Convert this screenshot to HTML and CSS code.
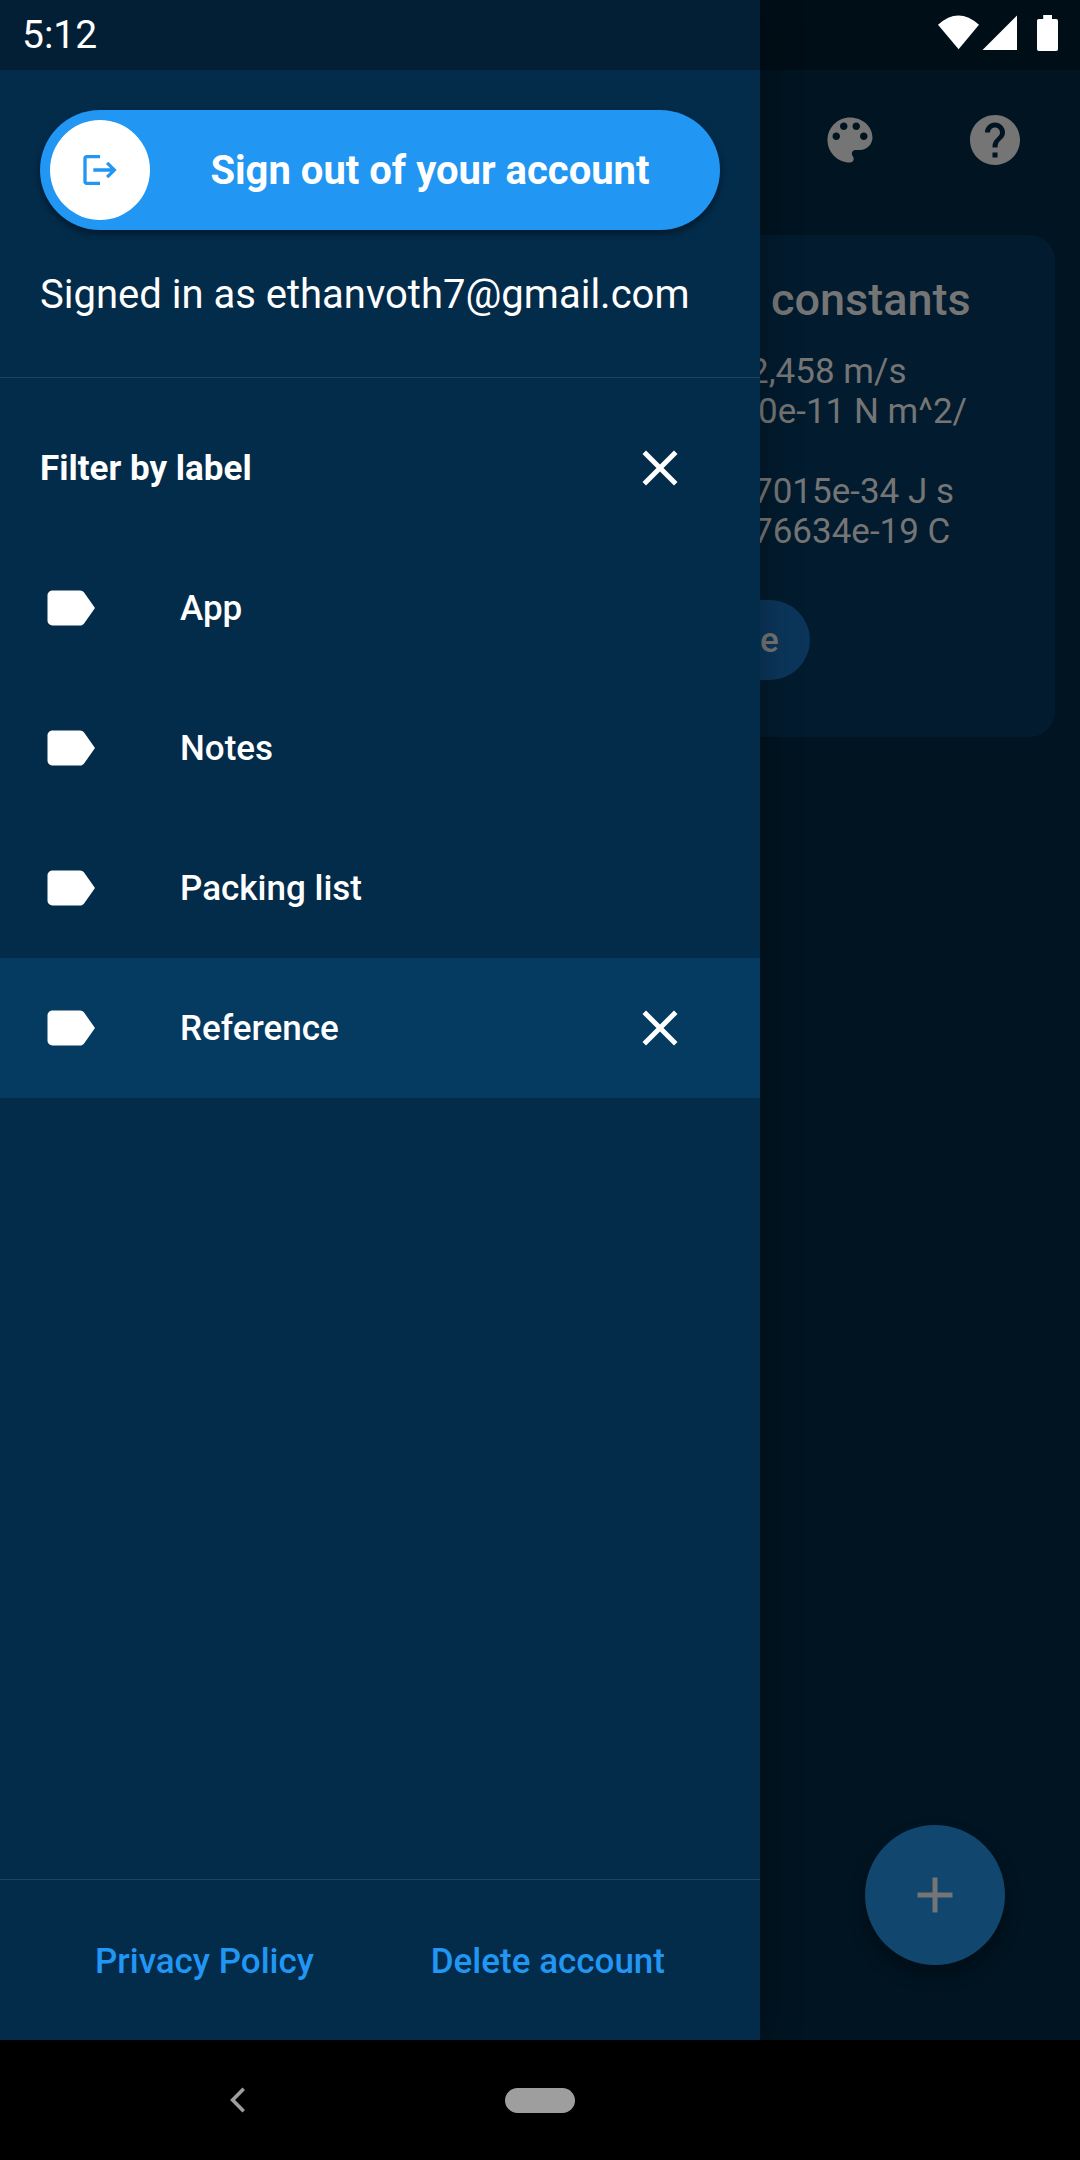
FILE: index.html
```html
<!DOCTYPE html>
<html lang="en">
<head>
<meta charset="utf-8">
<title>Notes</title>
<link rel="stylesheet" href="styles.css">
</head>
<body>
<div class="phone">
  <header class="status">
    <span class="clock">5:12</span>
    <svg class="status-icons" viewBox="0 0 124 40" fill="#fff">
      <path d="M0 9.8Q20.4-8.8 41 9.8L20.6 34.3Z"/>
      <path d="M44.5 35L79 .6V35Z"/>
      <path d="M105.2 0h8.8v4h4.2q1.8 0 1.8 1.8v28.4q0 1.8-1.8 1.8h-17.4q-1.8 0-1.8-1.8V5.8q0-1.8 1.8-1.8h4.4z"/>
    </svg>
  </header>
  <div class="screen">
    <aside class="drawer">
      <section class="account">
        <button class="signout">
          <span class="signout-badge">
            <svg viewBox="0 0 24 24" width="40" height="40" fill="#2196f3"><path d="M17 7l-1.410 1.410L18.170 11H8v2h10.170l-2.580 2.580L17 17l5-5zM4 5h8V3H4c-1.100 0-2 .9-2 2v14c0 1.100.9 2 2 2h8v-2H4V5z"/></svg>
          </span>
          <span class="signout-label">Sign out of your account</span>
        </button>
        <p class="signed-in">Signed in as ethanvoth7@gmail.com</p>
      </section>
      <nav class="labels">
        <div class="row">
          <span class="heading">Filter by label</span>
          <svg class="icon" viewBox="0 0 24 24"><path d="M19 6.410L17.590 5 12 10.590 6.410 5 5 6.410 10.590 12 5 17.590 6.410 19 12 13.410 17.590 19 19 17.590 13.410 12z"/></svg>
        </div>
        <div class="row">
          <svg class="icon" viewBox="0 0 24 24"><path d="M17.630 5.840C17.270 5.330 16.670 5 16 5L5 5.010C3.900 5.010 3 5.900 3 7v10c0 1.100.9 1.990 2 1.990L16 19c.67 0 1.270-.33 1.630-.84L22 12z"/></svg>
          <span class="name">App</span>
        </div>
        <div class="row">
          <svg class="icon" viewBox="0 0 24 24"><path d="M17.630 5.840C17.270 5.330 16.670 5 16 5L5 5.010C3.900 5.010 3 5.900 3 7v10c0 1.100.9 1.990 2 1.990L16 19c.67 0 1.270-.33 1.630-.84L22 12z"/></svg>
          <span class="name">Notes</span>
        </div>
        <div class="row">
          <svg class="icon" viewBox="0 0 24 24"><path d="M17.630 5.840C17.270 5.330 16.670 5 16 5L5 5.010C3.900 5.010 3 5.900 3 7v10c0 1.100.9 1.990 2 1.990L16 19c.67 0 1.270-.33 1.630-.84L22 12z"/></svg>
          <span class="name">Packing list</span>
        </div>
        <div class="row selected">
          <svg class="icon" viewBox="0 0 24 24"><path d="M17.630 5.840C17.270 5.330 16.670 5 16 5L5 5.010C3.900 5.010 3 5.900 3 7v10c0 1.100.9 1.990 2 1.990L16 19c.67 0 1.270-.33 1.630-.84L22 12z"/></svg>
          <span class="name">Reference</span>
          <svg class="icon" viewBox="0 0 24 24"><path d="M19 6.410L17.590 5 12 10.590 6.410 5 5 6.410 10.590 12 5 17.590 6.410 19 12 13.410 17.590 19 19 17.590 13.410 12z"/></svg>
        </div>
      </nav>
      <footer class="links">
        <a class="link">Privacy Policy</a>
        <a class="link">Delete account</a>
      </footer>
    </aside>
    <main class="page">
      <div class="toolbar">
        <svg class="tool" viewBox="0 0 24 24"><path d="M12 3c-4.970 0-9 4.030-9 9s4.030 9 9 9c.83 0 1.500-.67 1.500-1.500 0-.39-.15-.74-.39-1.010-.23-.26-.38-.61-.38-.99 0-.83.67-1.500 1.500-1.500H16c2.760 0 5-2.240 5-5 0-4.420-4.030-8-9-8zm-5.500 9c-.83 0-1.500-.67-1.500-1.500S5.670 9 6.500 9 8 9.670 8 10.500 7.330 12 6.500 12zm3-4C8.670 8 8 7.330 8 6.500S8.670 5 9.500 5s1.500.67 1.500 1.500S10.330 8 9.500 8zm5 0c-.83 0-1.500-.67-1.500-1.500S13.670 5 14.500 5s1.500.67 1.500 1.500S15.330 8 14.500 8zm3 4c-.83 0-1.500-.67-1.500-1.500S16.670 9 17.500 9s1.500.67 1.500 1.500-.67 1.500-1.500 1.500z"/></svg>
        <svg class="tool" viewBox="0 0 24 24"><path d="M12 2C6.480 2 2 6.480 2 12s4.480 10 10 10 10-4.480 10-10S17.520 2 12 2zm1 17h-2v-2h2v2zm2.070-7.750l-.9.920C13.450 12.900 13 13.500 13 15h-2v-.5c0-1.100.45-2.100 1.170-2.830l1.240-1.260c.37-.36.59-.86.59-1.410 0-1.100-.9-2-2-2s-2 .9-2 2H8c0-2.210 1.790-4 4-4s4 1.790 4 4c0 .88-.36 1.680-.93 2.250z"/></svg>
      </div>
      <article class="card">
        <h2 class="card-title">constants</h2>
        <div class="card-text">
          <p class="line line-c">2,458 m/s</p>
          <p class="line line-g">0e-11 N m^2/</p>
          <p class="line line-h">7015e-34 J s</p>
          <p class="line line-e">76634e-19 C</p>
        </div>
        <span class="chip">e</span>
      </article>
      <button class="fab">
        <svg class="tool" viewBox="0 0 24 24"><path d="M19 13h-6v6h-2v-6H5v-2h6V5h2v6h6v2z"/></svg>
      </button>
    </main>
  </div>
  <footer class="navbar">
    <svg class="back" viewBox="0 0 16 26" fill="none" stroke="#9e9e9e" stroke-width="3.600"><path d="M13.700 1.800L2.600 13l11.100 11.200"/></svg>
    <span class="home"></span>
  </footer>
</div>
</body>
</html>
```
FILE: styles.css
```css
* {
  box-sizing: border-box;
  margin: 0;
  padding: 0;
}

body {
  background: #000;
  font-family: Roboto, sans-serif;
  color: #fff;
}

.phone {
  position: relative;
  display: flex;
  flex-direction: column;
  width: 1080px;
  height: 2160px;
  overflow: hidden;
}

/* translucent bar over both the drawer and the page */
.status {
  position: absolute;
  inset: 0 0 auto 0;
  z-index: 2;
  display: flex;
  justify-content: space-between;
  align-items: flex-start;
  height: 70px;
  padding: 15px 18px 0 22px;
  background: rgba(0, 0, 0, 0.27);
}

.clock {
  font-size: 39px;
  line-height: 40px;
}

.status-icons {
  width: 124px;
  height: 40px;
}

.screen {
  display: flex;
  height: 2040px;
}

.drawer {
  position: relative;
  z-index: 1;
  display: flex;
  flex-direction: column;
  width: 760px;
  background: #032b4a;
  box-shadow: 0 0 40px rgba(0, 0, 0, 0.3);
}

.account {
  height: 378px;
  padding: 110px 40px 0;
  border-bottom: 1px solid #20435f;
}

.signout {
  display: flex;
  align-items: center;
  width: 680px;
  height: 120px;
  padding: 0 10px;
  border: 0;
  border-radius: 60px;
  background: #2196f3;
  box-shadow: 0 4px 6px rgba(0, 0, 0, 0.4);
  color: #fff;
  font-family: inherit;
}

.signout-badge {
  display: flex;
  align-items: center;
  justify-content: center;
  width: 100px;
  height: 100px;
  border-radius: 50%;
  background: #fff;
}

.signout-label {
  flex: 1;
  font-size: 40px;
  font-weight: 700;
  text-align: center;
}

.signed-in {
  margin-top: 41px;
  font-size: 40px;
  line-height: 47px;
  white-space: nowrap;
}

.labels {
  flex: 1;
  padding-top: 19.5px;
}

.row {
  display: flex;
  align-items: center;
  height: 140px;
  padding: 0 70px 0 40px;
  font-size: 35px;
}

.selected {
  background: #053a61;
}

.icon {
  width: 60px;
  height: 60px;
  fill: #fff;
}

.heading {
  flex: 1;
  padding-top: 2px;
  font-weight: 700;
}

.name {
  flex: 1;
  margin-left: 80px;
  padding-top: 2px;
  font-weight: 500;
}

.links {
  display: flex;
  align-items: center;
  justify-content: space-between;
  height: 161px;
  padding: 2px 95px 0;
  border-top: 1px solid #20435f;
}

.link {
  color: #2196f3;
  font-size: 35px;
  font-weight: 500;
}

.page {
  display: flex;
  flex-direction: column;
  width: 320px;
  padding-top: 70px;
  overflow: hidden;
  background: #001421;
  color: #757575;
}

.toolbar {
  display: flex;
  align-items: center;
  justify-content: space-between;
  height: 140px;
  padding: 0 55px 0 60px;
}

.tool {
  width: 60px;
  height: 60px;
  fill: #757575;
}

.card {
  width: 295px;
  height: 502px;
  margin-top: 25px;
  padding-top: 39px;
  border-radius: 0 25px 25px 0;
  background: #021b2e;
}

.card-title {
  margin-left: 11px;
  font-size: 45px;
  font-weight: 500;
  line-height: 52px;
}

.card-text {
  margin-top: 26px;
  font-size: 35px;
  line-height: 40px;
  white-space: nowrap;
}

.line-c {
  margin-left: -11px;
}

.line-g {
  margin-left: -2px;
}

.line-h {
  margin-top: 40px;
  margin-left: -7px;
}

.line-e {
  margin-left: -7px;
}

.chip {
  display: block;
  width: 50px;
  height: 80px;
  margin-top: 48px;
  padding-top: 1px;
  border-radius: 0 40px 40px 0;
  background: #0b365a;
  font-size: 35px;
  font-weight: 500;
  line-height: 80px;
}

.fab {
  display: flex;
  align-items: center;
  justify-content: center;
  width: 140px;
  height: 140px;
  margin: auto 0 75px 105px;
  border: 0;
  border-radius: 50%;
  background: #11466f;
  box-shadow: 0 10px 18px rgba(0, 0, 0, 0.3);
}

.navbar {
  display: flex;
  align-items: center;
  gap: 259px;
  height: 120px;
  padding-left: 230px;
  background: #000;
}

.back {
  width: 16px;
  height: 26px;
}

.home {
  width: 70px;
  height: 25px;
  border-radius: 13px;
  background: #9e9e9e;
}
```
